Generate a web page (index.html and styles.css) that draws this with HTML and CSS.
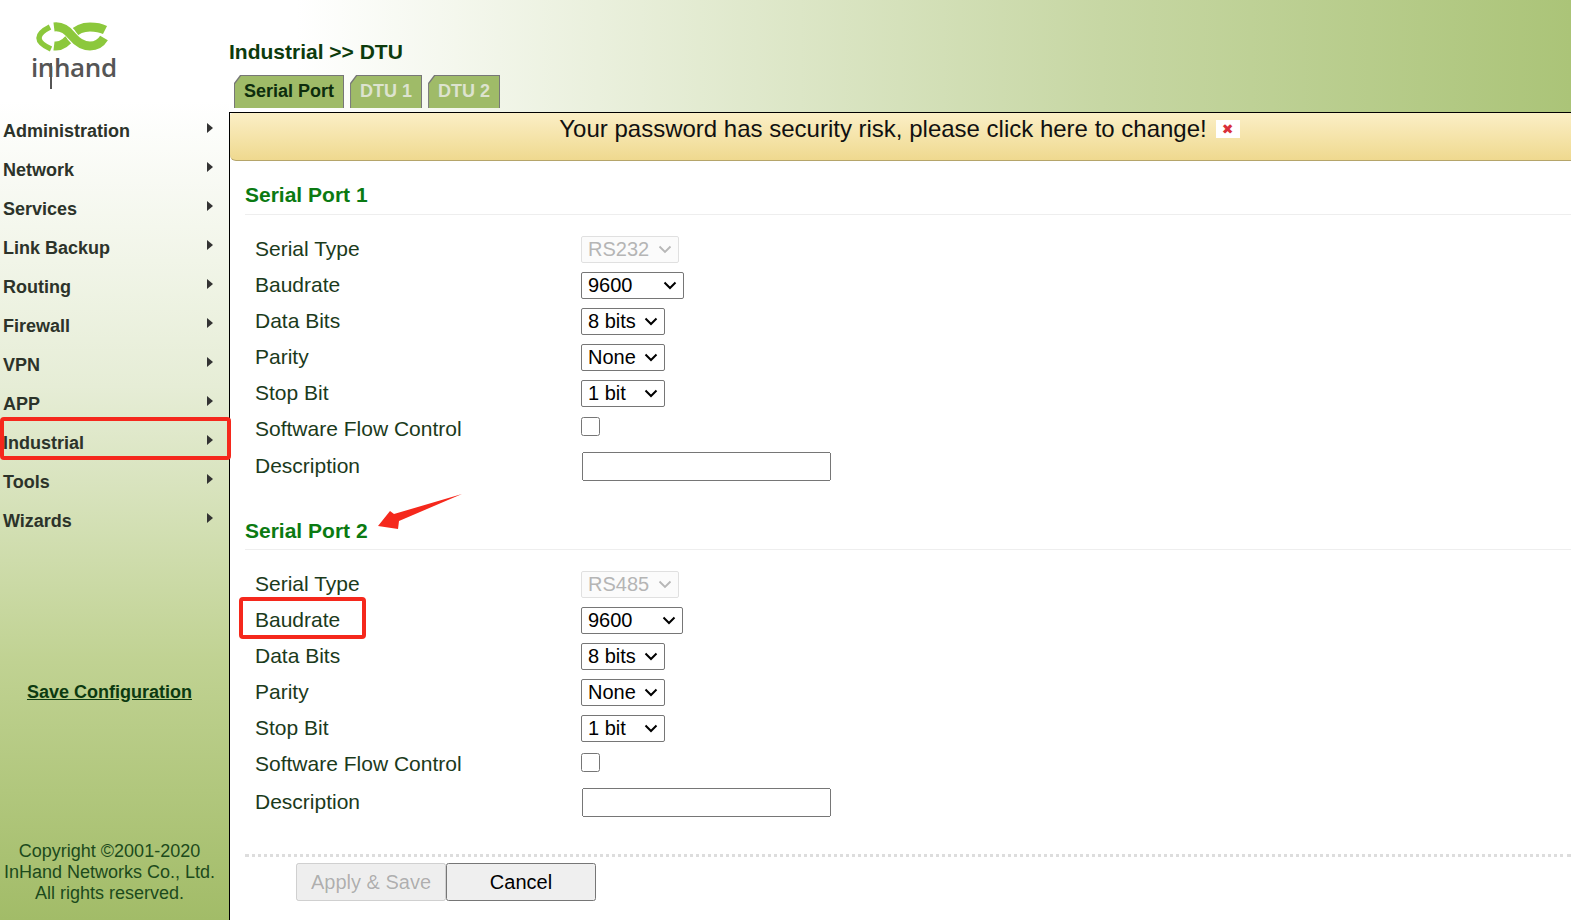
FILE: index.html
```html
<!DOCTYPE html>
<html lang="en">
<head>
<meta charset="utf-8">
<title>Industrial &gt;&gt; DTU</title>
<link rel="stylesheet" href="styles.css">
</head>
<body>
<div class="page">
  <aside class="sidebar">
    <div class="logo">
      <svg class="logo-svg" width="100" height="72" viewBox="0 0 100 72">
        <path class="logo-band" d="M36 28C44 29 50 23 54 17C59 11 65 9 72 9C78 9 83 10 87 12"/>
        <path class="logo-gap" d="M50 13C52 15 53 16 54 18C55 19 56 21 58 22"/>
        <path class="logo-band" d="M36 9C44 8 50 13 54 18C59 24 65 28 72 28C78 28 83 25 86 20"/>
        <path class="logo-band logo-thin" d="M32 9C24 13 21 17 21 20C21 23 24 27 33 31"/>
        <text class="logo-word" x="13" y="59">inhand</text>
        <rect class="logo-stem" x="32" y="45" width="2" height="26"/>
      </svg>
    </div>
    <nav class="menu">
      <a class="menu-item">Administration<i class="caret"></i></a>
      <a class="menu-item">Network<i class="caret"></i></a>
      <a class="menu-item">Services<i class="caret"></i></a>
      <a class="menu-item">Link Backup<i class="caret"></i></a>
      <a class="menu-item">Routing<i class="caret"></i></a>
      <a class="menu-item">Firewall<i class="caret"></i></a>
      <a class="menu-item">VPN<i class="caret"></i></a>
      <a class="menu-item">APP<i class="caret"></i></a>
      <a class="menu-item">Industrial<i class="caret"></i></a>
      <a class="menu-item">Tools<i class="caret"></i></a>
      <a class="menu-item">Wizards<i class="caret"></i></a>
    </nav>
    <a class="save-config">Save Configuration</a>
    <p class="copyright">Copyright ©2001-2020<br>InHand Networks Co., Ltd.<br>All rights reserved.</p>
  </aside>

  <main class="main">
    <header class="topbar">
      <h1 class="crumb">Industrial &gt;&gt; DTU</h1>
      <div class="tabs">
        <a class="tab tab-active"><span>Serial Port</span></a>
        <a class="tab"><span>DTU 1</span></a>
        <a class="tab"><span>DTU 2</span></a>
      </div>
    </header>
    <div class="panel">
      <div class="banner">
        <span>Your password has security risk, please click here to change!</span>
        <span class="banner-close">✖</span>
      </div>
      <div class="content">
        <section class="section">
          <h2 class="section-title">Serial Port 1</h2>
          <div class="rows">
            <div class="row"><label class="row-label">Serial Type</label><select class="sel sel-type" disabled><option>RS232</option></select></div>
            <div class="row"><label class="row-label">Baudrate</label><select class="sel sel-baud"><option>9600</option></select></div>
            <div class="row"><label class="row-label">Data Bits</label><select class="sel sel-small"><option>8 bits</option></select></div>
            <div class="row"><label class="row-label">Parity</label><select class="sel sel-small"><option>None</option></select></div>
            <div class="row"><label class="row-label">Stop Bit</label><select class="sel sel-small"><option>1 bit</option></select></div>
            <div class="row"><label class="row-label">Software Flow Control</label><input class="check" type="checkbox"></div>
            <div class="row row-desc"><label class="row-label">Description</label><input class="text" type="text"></div>
          </div>
        </section>
        <section class="section section-second">
          <h2 class="section-title">Serial Port 2</h2>
          <div class="rows">
            <div class="row"><label class="row-label">Serial Type</label><select class="sel sel-type" disabled><option>RS485</option></select></div>
            <div class="row"><label class="row-label">Baudrate</label><select class="sel sel-baud2"><option>9600</option></select></div>
            <div class="row"><label class="row-label">Data Bits</label><select class="sel sel-small"><option>8 bits</option></select></div>
            <div class="row"><label class="row-label">Parity</label><select class="sel sel-small"><option>None</option></select></div>
            <div class="row row-tall"><label class="row-label">Stop Bit</label><select class="sel sel-small"><option>1 bit</option></select></div>
            <div class="row row-flow"><label class="row-label">Software Flow Control</label><input class="check" type="checkbox"></div>
            <div class="row row-desc"><label class="row-label">Description</label><input class="text" type="text"></div>
          </div>
        </section>
        <div class="actions">
          <button class="btn" type="button" disabled>Apply &amp; Save</button><button class="btn" type="button">Cancel</button>
        </div>
      </div>
    </div>
  </main>
</div>

<div class="mark mark-menu"></div>
<div class="mark mark-baud"></div>
<svg class="mark-arrow" width="90" height="36" viewBox="0 0 90 36">
  <polygon points="0,32 12,17 16,20 84,0 21,27 20,35"/>
</svg>
</body>
</html>
```
FILE: styles.css
```css
* { box-sizing: border-box; }
html, body { margin: 0; padding: 0; background: #fff; }
body {
  position: relative;
  width: 1582px;
  height: 920px;
  overflow: hidden;
  font-family: "Liberation Sans", Arial, sans-serif;
}
.page { display: flex; width: 1571px; height: 920px; }

/* Sidebar */
.sidebar {
  width: 229px;
  flex: none;
  display: flex;
  flex-direction: column;
  background: linear-gradient(to bottom, #fff 0, #fff 11%, #e6edd6 42%, #c0d292 72%, #a2bc68 100%);
}
.logo { height: 112px; padding: 18px 0 0 18px; }
.logo-svg { display: block; overflow: visible; }
.logo-band { fill: none; stroke: #8cc83c; stroke-width: 9; }
.logo-gap { fill: none; stroke: #fff; stroke-width: 11; }
.logo-thin { stroke-width: 5.5; }
.logo-word { font-family: "Open Sans", sans-serif; font-size: 26px; font-weight: 600; letter-spacing: -0.4px; fill: #555; }
.logo-stem { fill: #555; }
.menu { display: flex; flex-direction: column; }
.menu-item {
  display: flex;
  align-items: center;
  justify-content: space-between;
  height: 39px;
  padding: 0 16px 0 3px;
  font-size: 18px;
  font-weight: 700;
  color: #2c332a;
}
.caret {
  width: 0;
  height: 0;
  margin-top: -8px;
  border-left: 6px solid #333;
  border-top: 5px solid transparent;
  border-bottom: 5px solid transparent;
}
.save-config {
  margin-top: 140px;
  padding-right: 10px;
  text-align: center;
  font-size: 18px;
  line-height: 22px;
  font-weight: 700;
  color: #0c3a10;
  text-decoration: underline;
}
.copyright {
  margin: auto 0 16px;
  padding-right: 10px;
  text-align: center;
  font-size: 18px;
  line-height: 21px;
  color: #1c4a1c;
}

/* Main */
.main { flex: 1; min-width: 0; display: flex; flex-direction: column; }
.topbar {
  height: 112px;
  flex: none;
  padding-top: 40px;
  background: linear-gradient(to right, #fff 0, #fff 5%, #c7d7a4 65%, #abc478 100%);
}
.crumb {
  margin: 0;
  font-size: 21px;
  line-height: 24px;
  font-weight: 700;
  color: #0d3b0d;
}
.tabs { display: flex; gap: 6px; margin: 11px 0 0 5px; }
.tab {
  display: block;
  height: 33px;
  padding: 1px 1px 0;
  background: #777;
  clip-path: polygon(6px 0, 100% 0, 100% 100%, 0 100%, 0 8px);
}
.tab span {
  display: block;
  height: 32px;
  padding: 0 9px;
  line-height: 31px;
  font-size: 18px;
  font-weight: 700;
  color: #dde3cf;
  background: #9fbb68;
  clip-path: polygon(6px 0, 100% 0, 100% 100%, 0 100%, 0 8px);
}
.tab-active span { color: #0d2d0d; }
.panel { flex: 1; border-top: 1px solid #000; border-left: 1px solid #000; background: #fff; min-height: 0; }
.banner {
  height: 48px;
  padding: 2px 2px 0 0;
  display: flex;
  justify-content: center;
  gap: 9px;
  font-size: 24px;
  line-height: 28px;
  color: #111;
  background: linear-gradient(to bottom, #fbefc6, #efd98f);
  border-bottom: 1px solid #b5a56a;
  border-radius: 3px 0 0 6px;
}
.banner-close {
  width: 24px;
  height: 18px;
  margin-top: 5px;
  background: #fff;
  color: #d9303a;
  font-size: 14px;
  line-height: 18px;
  text-align: center;
  font-family: "DejaVu Sans", sans-serif;
}
.content { padding: 22px 0 0 15px; }
.section-title {
  margin: 0;
  height: 32px;
  padding-bottom: 7px;
  border-bottom: 1px solid #eee;
  font-size: 21px;
  line-height: 24px;
  font-weight: 700;
  color: #0b7a12;
}
.section-second { margin-top: 35px; }
.section-second .section-title { height: 31px; padding-bottom: 6px; }
.rows { padding: 17px 0 0 10px; }
.row { display: flex; height: 36px; }
.row-tall { height: 37px; }
.row-label {
  width: 326px;
  flex: none;
  font-size: 21px;
  line-height: 34px;
  color: #1b3a1b;
}
.row-desc .row-label { line-height: 36px; }
.row-flow .row-label { line-height: 32px; }
.sel {
  display: block;
  height: 27px;
  margin: 4px 0 0;
  padding: 0 0 2px 6px;
  appearance: none;
  -webkit-appearance: none;
  color: #000;
  border: 1px solid #767676;
  border-radius: 2px;
  font-family: "Liberation Sans", Arial, sans-serif;
  font-size: 20px;
  background: #fff url("data:image/svg+xml,%3Csvg xmlns='http://www.w3.org/2000/svg' width='14' height='9' viewBox='0 0 14 9'%3E%3Cpath d='M1.5 1.5l5.5 5.5 5.5-5.5' fill='none' stroke='%23000' stroke-width='2'/%3E%3C/svg%3E") no-repeat right 6px center;
}
.sel:disabled {
  color: #969696;
  border-color: #d4d4d4;
  background: #fafafa url("data:image/svg+xml,%3Csvg xmlns='http://www.w3.org/2000/svg' width='14' height='9' viewBox='0 0 14 9'%3E%3Cpath d='M1.5 1.5l5.5 5.5 5.5-5.5' fill='none' stroke='%23999' stroke-width='1.8'/%3E%3C/svg%3E") no-repeat right 6px center;
}
.sel-type { width: 98px; }
.sel-baud { width: 103px; }
.sel-baud2 { width: 102px; }
.sel-small { width: 84px; }
.check { display: block; width: 19px; height: 19px; margin: 5px 0 0; }
.text { display: block; width: 249px; height: 29px; margin: 4px 0 0 1px; }
.actions {
  margin-top: 34px;
  padding: 6px 0 0 51px;
  border-top: 3px dotted #ddd;
  display: flex;
}
.btn {
  width: 150px;
  height: 38px;
  padding: 0;
  font-family: "Liberation Sans", Arial, sans-serif;
  font-size: 20px;
}

/* Annotations laid over the screenshot */
.mark {
  position: absolute;
  border: 4px solid #f5281c;
  border-radius: 4px;
}
.mark-menu { left: 0; top: 417px; width: 231px; height: 43px; }
.mark-baud { left: 239px; top: 597px; width: 127px; height: 42px; }
.mark-arrow { position: absolute; left: 378px; top: 494px; }
.mark-arrow polygon { fill: #f5281c; }
```
